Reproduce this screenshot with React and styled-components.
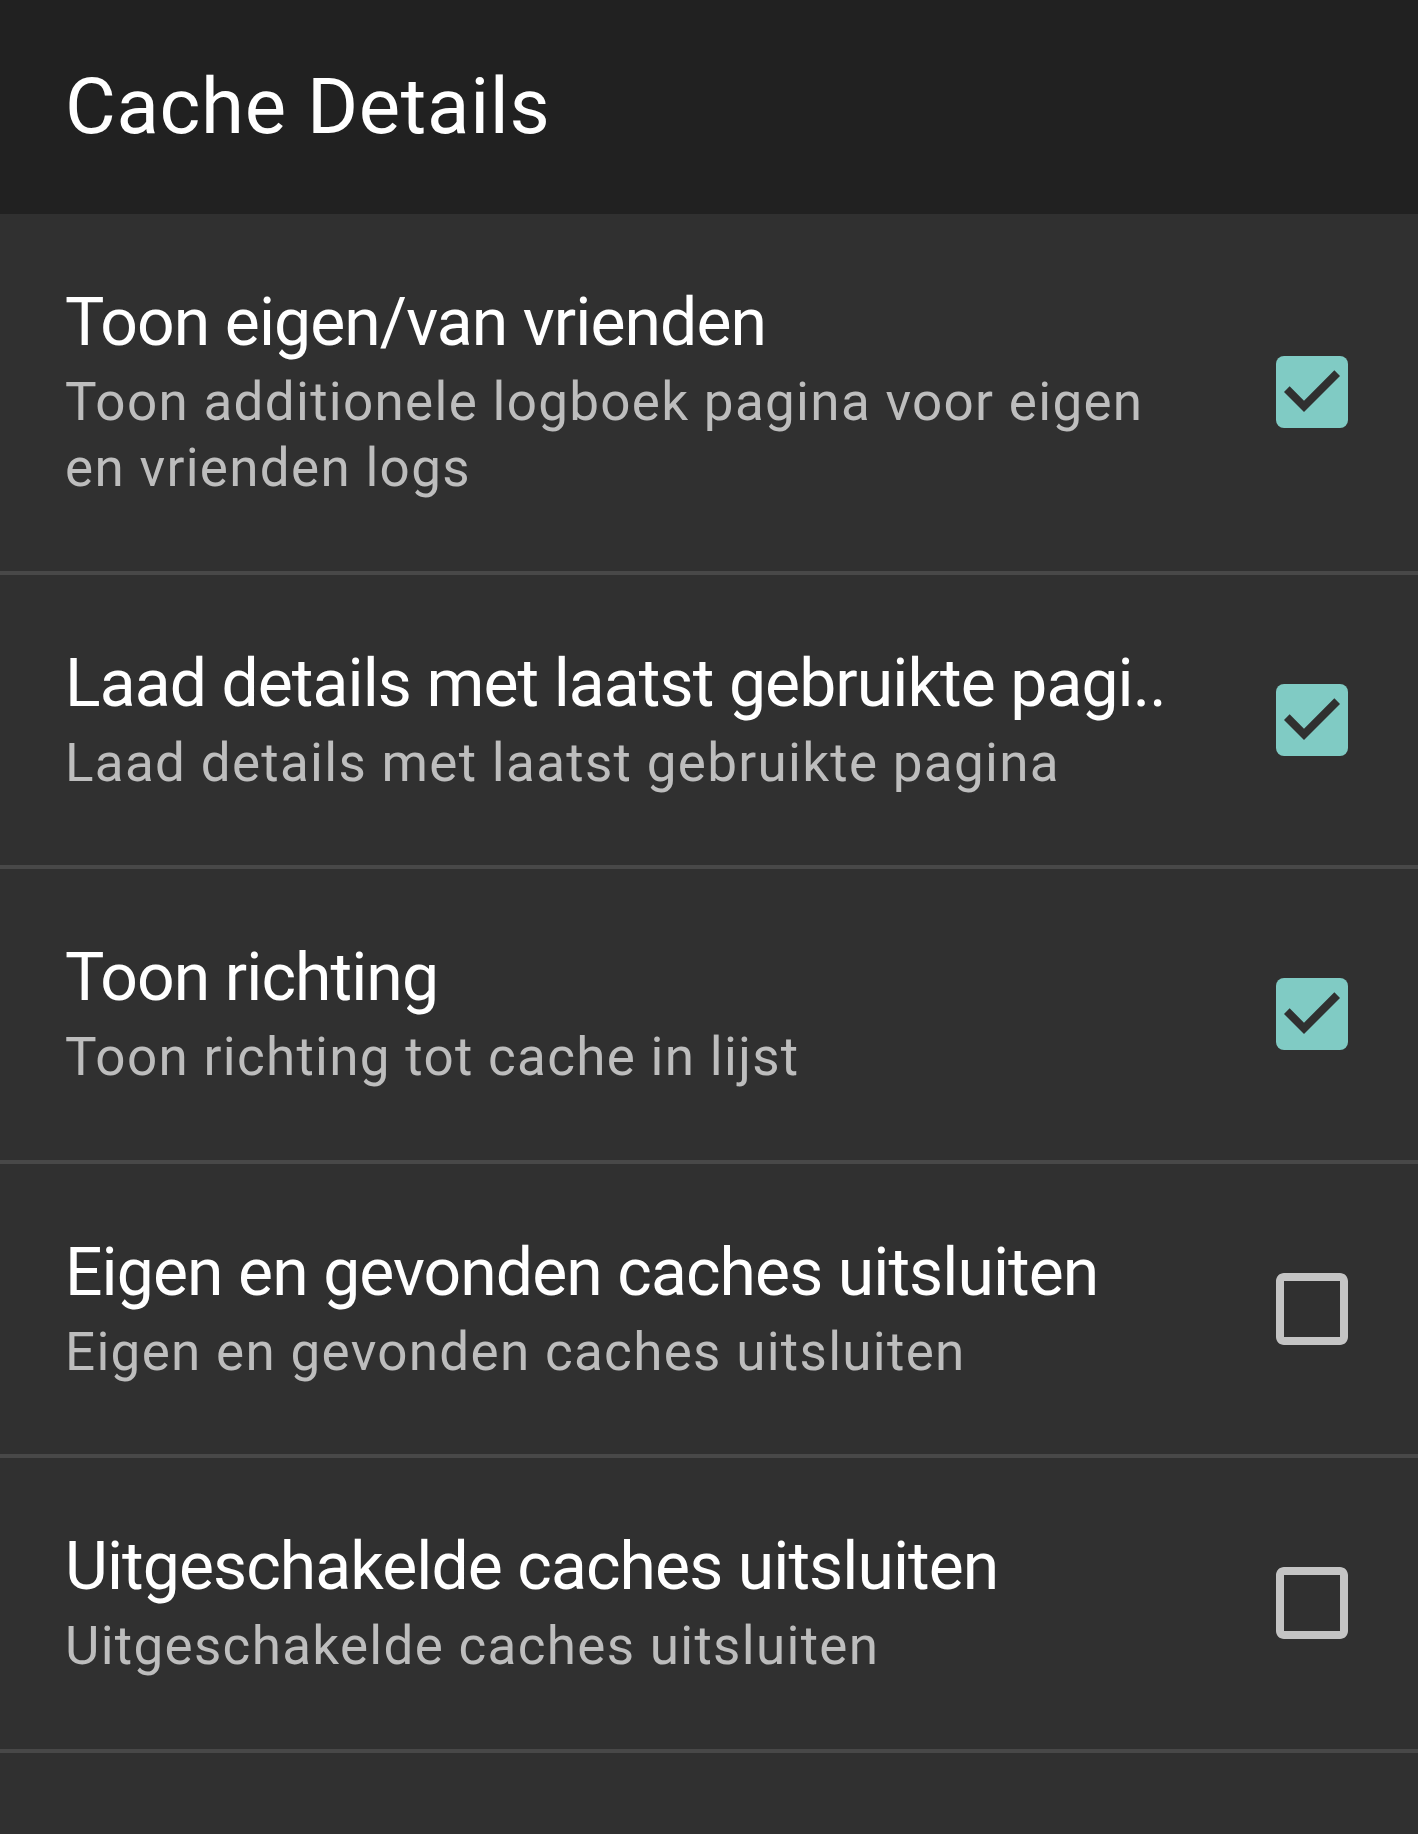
import styled, { createGlobalStyle } from 'styled-components'

const GlobalStyle = createGlobalStyle`
  html, body {
    margin: 0;
    padding: 0;
    background: #303030;
  }
  body {
    font-family: Roboto, "Noto Sans", sans-serif;
    -webkit-font-smoothing: antialiased;
  }
`

const Screen = styled.div`
  width: 1418px;
  min-height: 1834px;
  background: #303030;
  display: flex;
  flex-direction: column;
`

const Toolbar = styled.header`
  height: 214px;
  background: #212121;
  display: flex;
  align-items: center;
  padding-left: 65px;
  box-sizing: border-box;
`

const ToolbarTitle = styled.h1`
  margin: 0;
  color: #ffffff;
  font-size: 78px;
  font-weight: 400;
  line-height: 1;
  letter-spacing: 0.7px;
`

const List = styled.ul`
  list-style: none;
  margin: 0;
  padding: 0;
`

const Row = styled.li`
  display: flex;
  align-items: center;
  gap: 64px;
  padding: 69px 58px 69.5px 65px;
  border-bottom: 4px solid #484848;
`

const TextBlock = styled.div`
  flex: 1;
  min-width: 0;
  display: flex;
  flex-direction: column;
  gap: 6px;
`

const Title = styled.span`
  color: #ffffff;
  font-size: 66px;
  line-height: 80px;
  letter-spacing: -0.9px;
  white-space: nowrap;
  overflow: hidden;
`

const Summary = styled.span`
  color: #bdbdbd;
  font-size: 53px;
  line-height: 66px;
  letter-spacing: 1.3px;
`

const Box = styled.svg`
  flex: none;
  width: 96px;
  height: 96px;
`

const CheckBox = ({ checked }) =>
  checked ? (
    <Box viewBox="0 0 24 24">
      <rect x="3" y="3" width="18" height="18" rx="2" fill="#80cbc4" />
      <path d="M10 17l-5-5 1.41-1.41L10 14.17l7.59-7.59L19 8z" fill="#303030" />
    </Box>
  ) : (
    <Box viewBox="0 0 24 24">
      <path
        d="M19 5v14H5V5h14m0-2H5c-1.1 0-2 .9-2 2v14c0 1.1.9 2 2 2h14c1.1 0 2-.9 2-2V5c0-1.1-.9-2-2-2z"
        fill="#c4c4c4"
      />
    </Box>
  )

const prefs = [
  {
    title: 'Toon eigen/van vrienden',
    summary: 'Toon additionele logboek pagina voor eigen en vrienden logs',
    checked: true,
  },
  {
    title: 'Laad details met laatst gebruikte pagi..',
    summary: 'Laad details met laatst gebruikte pagina',
    checked: true,
  },
  {
    title: 'Toon richting',
    summary: 'Toon richting tot cache in lijst',
    checked: true,
  },
  {
    title: 'Eigen en gevonden caches uitsluiten',
    summary: 'Eigen en gevonden caches uitsluiten',
    checked: false,
  },
  {
    title: 'Uitgeschakelde caches uitsluiten',
    summary: 'Uitgeschakelde caches uitsluiten',
    checked: false,
  },
]

const App = () => (
  <Screen>
    <GlobalStyle />
    <Toolbar>
      <ToolbarTitle>Cache Details</ToolbarTitle>
    </Toolbar>
    <List>
      {prefs.map(p => (
        <Row key={p.title}>
          <TextBlock>
            <Title>{p.title}</Title>
            <Summary>{p.summary}</Summary>
          </TextBlock>
          <CheckBox checked={p.checked} />
        </Row>
      ))}
    </List>
  </Screen>
)

export default App
